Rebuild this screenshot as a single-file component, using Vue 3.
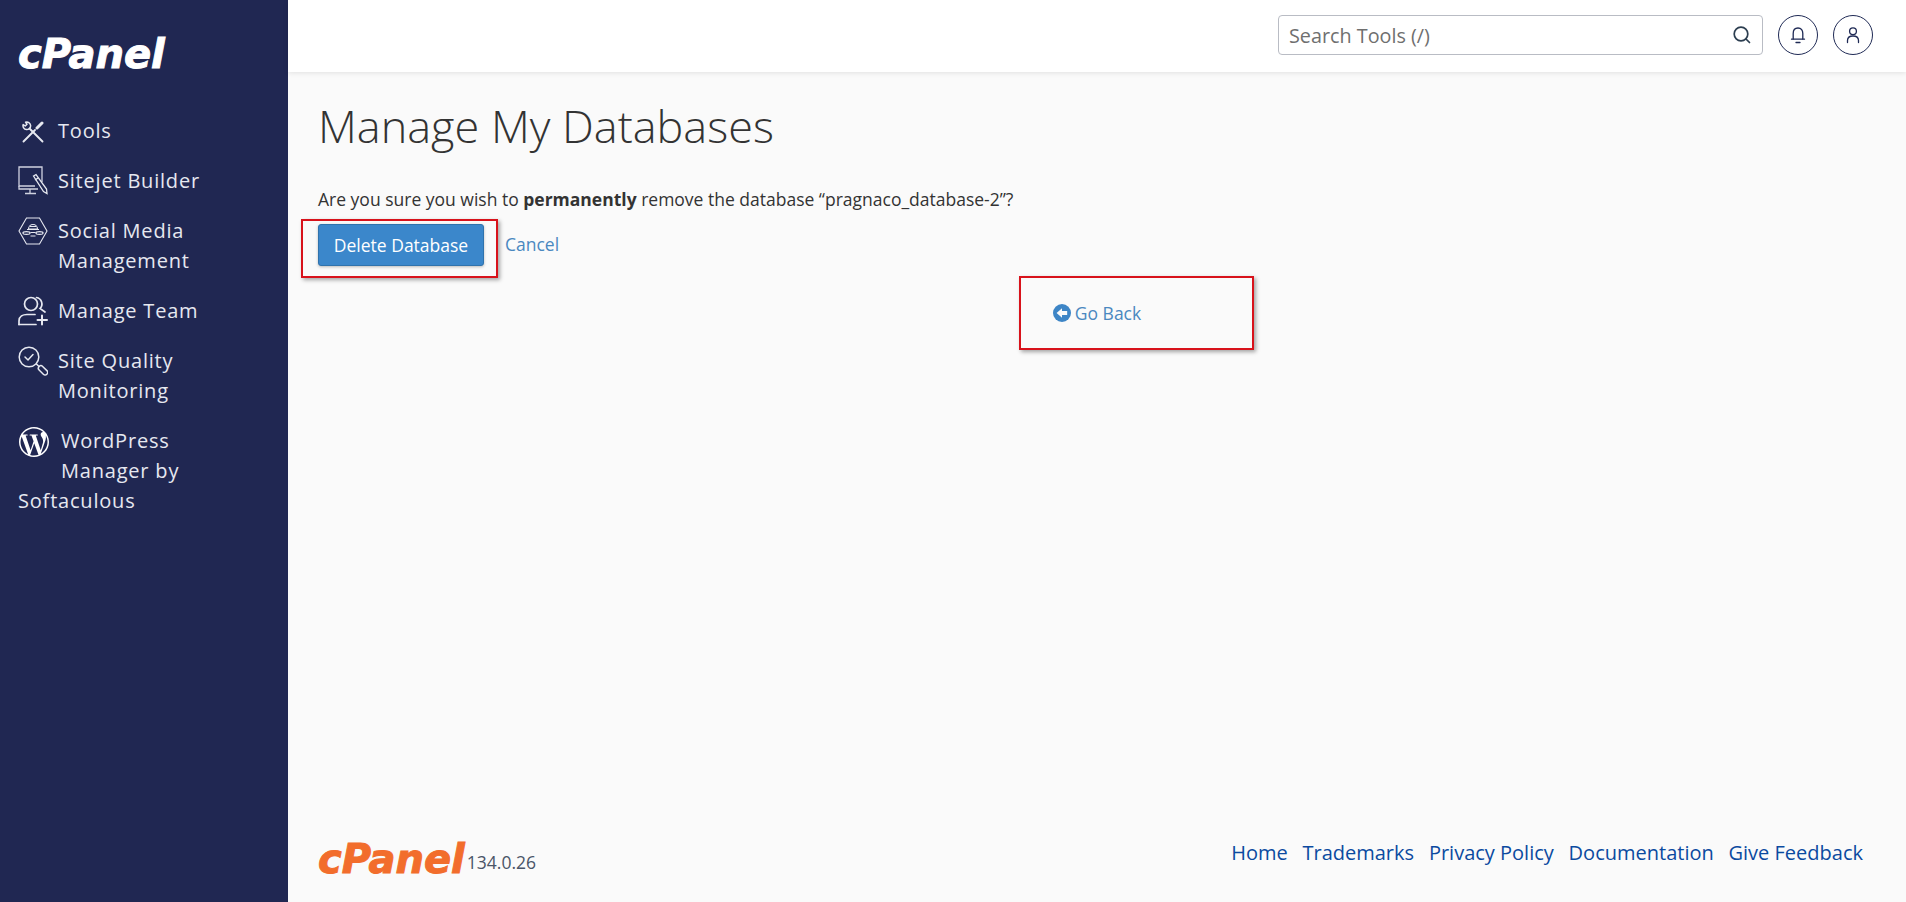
<script setup>
const footerLinks = ['Home', 'Trademarks', 'Privacy Policy', 'Documentation', 'Give Feedback']
</script>

<template>
  <div class="layout">
    <aside class="sidebar">
      <div class="brand">cPanel</div>
      <nav class="nav">
        <a class="item">
          <svg class="ico tools" viewBox="0 0 22 22" fill="none" stroke="#e6e8f0" stroke-width="1.9" stroke-linecap="round" stroke-linejoin="round">
            <path d="M1.5 20.5 L13 9" />
            <path d="M15 7 L20 2" stroke-width="3" />
            <path d="M7.5 7.5 L20.5 20.5" />
            <path d="M3.6 1.2 A3.8 3.8 0 1 1 1.2 3.6 L3.2 5 L5 3.2 Z" stroke-width="1.5" />
          </svg>
          <span>Tools</span>
        </a>
        <a class="item">
          <svg class="ico" viewBox="0 0 30 30" fill="none" stroke="#cfd2e0" stroke-width="1.3">
            <path d="M24 16 V1 H1 V20 H17" />
            <path d="M1 20 V23 H20" />
            <path d="M12 23 V27 M7 27.5 H18" />
            <path d="M15.5 10 L18 8.6 L28.5 23 L29 27.5 L25.5 25.5 Z" fill="#202752" stroke="#e6e8f0" />
            <path d="M17 14 L20 12" stroke="#e6e8f0" />
          </svg>
          <span>Sitejet Builder</span>
        </a>
        <a class="item">
          <svg class="ico" viewBox="0 0 30 28" fill="none" stroke="#e6e8f0" stroke-width="1.1">
            <path d="M8.5 1 H21.5 L29 14 L21.5 27 H8.5 L1 14 Z" />
            <path d="M10.5 12 A4.5 4.5 0 0 1 19.5 12 Z" />
            <path d="M9 12.5 H21 M12 9.5 H18" />
            <ellipse cx="8.5" cy="16" rx="3.6" ry="1.4" />
            <ellipse cx="21.5" cy="16" rx="3.6" ry="1.4" />
            <path d="M12.5 15.5 H17.5 M12.5 19 H17.5" />
          </svg>
          <span>Social Media<br />Management</span>
        </a>
        <a class="item">
          <svg class="ico" viewBox="0 0 30 30" fill="none" stroke="#e6e8f0" stroke-width="1.7" stroke-linecap="round">
            <circle cx="13" cy="8" r="6.5" />
            <path d="M18.5 1.5 A6.5 6.5 0 0 1 22 12.5 L27 16" />
            <path d="M1 28.5 V25 C1 20.5 5 18.5 9 18.5 H17" />
            <path d="M1 28.5 H18" />
            <path d="M24 19.5 V28.5 M19.5 24 H29" stroke-width="2" />
          </svg>
          <span>Manage Team</span>
        </a>
        <a class="item">
          <svg class="ico" viewBox="0 0 30 30" fill="none" stroke="#e6e8f0" stroke-width="1.5" stroke-linecap="round">
            <circle cx="11" cy="11" r="9.8" />
            <path d="M7 11 L10 14 L15 8.5" />
            <path d="M18.5 18 L21 20.5" />
            <rect x="19.5" y="21.8" width="11" height="5" rx="2.5" transform="rotate(45 25 24.3)" />
          </svg>
          <span>Site Quality<br />Monitoring</span>
        </a>
        <a class="item wp">
          <svg class="ico wp-ico" viewBox="0 0 24 24">
            <path fill="#fff" d="M21.469 6.825c.84 1.537 1.318 3.3 1.318 5.175 0 3.979-2.156 7.456-5.363 9.325l3.295-9.527c.615-1.54.82-2.771.82-3.864 0-.405-.026-.78-.07-1.11m-7.981.105c.647-.03 1.232-.105 1.232-.105.582-.075.514-.93-.067-.899 0 0-1.755.135-2.88.135-1.064 0-2.85-.15-2.85-.15-.585-.03-.661.855-.075.885 0 0 .54.061 1.125.09l1.68 4.605-2.37 7.08L5.354 6.9c.649-.03 1.234-.1 1.234-.1.585-.075.516-.93-.065-.896 0 0-1.746.138-2.874.138-.2 0-.438-.008-.69-.015C4.911 3.15 8.235 1.215 12 1.215c2.809 0 5.365 1.072 7.286 2.833-.046-.003-.091-.009-.141-.009-1.06 0-1.812.923-1.812 1.914 0 .89.513 1.643 1.06 2.531.411.72.89 1.643.89 2.977 0 .915-.354 1.994-.821 3.479l-1.075 3.585-3.9-11.61.001.014zM12 22.784c-1.059 0-2.081-.153-3.048-.437l3.237-9.406 3.315 9.087c.024.053.05.101.078.149-1.12.393-2.325.609-3.582.609M1.211 12c0-1.564.336-3.05.935-4.39L7.29 21.709C3.694 19.96 1.212 16.271 1.211 12M12 0C5.385 0 0 5.385 0 12s5.385 12 12 12 12-5.385 12-12S18.615 0 12 0" />
          </svg>
          <span>WordPress<br />Manager by<br />Softaculous</span>
        </a>
      </nav>
    </aside>

    <div class="main">
      <header class="topbar">
        <div class="search">
          <span class="placeholder">Search Tools (/)</span>
          <svg class="search-ico" viewBox="0 0 20 20" fill="none" stroke="#2c3e50" stroke-width="1.7" stroke-linecap="round">
            <circle cx="9" cy="9" r="6.8" />
            <path d="M14 14 L17.5 17.5" />
          </svg>
        </div>
        <button class="round">
          <svg viewBox="0 0 20 20" width="20" height="20" fill="none" stroke="#1f2a55" stroke-width="1.3" stroke-linecap="round">
            <path d="M5.2 14 V8.5 C5.2 5 7 3 10 3 C13 3 14.8 5 14.8 8.5 V14" />
            <path d="M3.5 14.2 H16.5" />
            <path d="M8 17.5 H12" />
          </svg>
        </button>
        <button class="round">
          <svg viewBox="0 0 20 20" width="20" height="20" fill="none" stroke="#1f2a55" stroke-width="1.3" stroke-linecap="round">
            <circle cx="10" cy="6.2" r="3.4" />
            <path d="M4.5 17.5 V15.5 C4.5 12.5 7 11 10 11 C13 11 15.5 12.5 15.5 15.5 V17.5" />
          </svg>
        </button>
      </header>

      <main class="content">
        <h1 class="title">Manage My Databases</h1>
        <p class="question">Are you sure you wish to <strong>permanently</strong> remove the database “pragnaco_database-2”?</p>
        <div class="actions">
          <button class="primary">Delete Database</button>
          <a class="link cancel">Cancel</a>
          <span class="mark mark-delete"></span>
        </div>
        <div class="back">
          <a class="link back-link">
            <svg viewBox="0 0 16 16" width="18" height="18">
              <circle cx="8" cy="8" r="8" fill="#3d85c6" />
              <path d="M3.2 8 L8 3.8 V6.3 H12.6 V9.7 H8 V12.2 Z" fill="#fafafa" />
            </svg>
            <span>Go Back</span>
          </a>
          <span class="mark mark-back"></span>
        </div>
      </main>

      <footer class="footer">
        <div class="foot-left">
          <span class="foot-logo">cPanel</span>
          <span class="version">134.0.26</span>
        </div>
        <div class="foot-links">
          <a v-for="l in footerLinks" :key="l">{{ l }}</a>
        </div>
      </footer>
    </div>
  </div>
</template>

<style>
html, body { margin: 0; padding: 0; }
</style>

<style scoped>
.layout {
  display: flex;
  width: 1906px;
  height: 902px;
  overflow: hidden;
  font-family: "Open Sans", "Liberation Sans", sans-serif;
  background: #fafafa;
  color: #333;
}
.sidebar {
  width: 288px;
  flex: none;
  background: #202752;
  color: #e6e8f0;
  padding: 0 18px;
  box-sizing: border-box;
}
.brand {
  height: 116px;
  padding-top: 31px;
  box-sizing: border-box;
  font-family: "DejaVu Sans", sans-serif;
  font-weight: 700;
  font-style: oblique;
  font-size: 40px;
  line-height: 46px;
  -webkit-text-stroke: 1px #fff;
  color: #fff;
}
.nav {
  display: flex;
  flex-direction: column;
  gap: 20px;
}
.item {
  display: flex;
  align-items: flex-start;
  font-size: 20px;
  line-height: 30px;
  letter-spacing: 0.8px;
}
.item > span { margin-left: 10px; }
.ico {
  width: 30px;
  height: 30px;
  flex: none;
}
.tools {
  width: 22px;
  height: 22px;
  margin: 5px 4px 0 4px;
}
.wp {
  display: block;
}
.wp > span { margin-left: 0; }
.wp-ico {
  float: left;
  margin: 1px 12px 29px 1px;
}
.main {
  flex: 1;
  min-width: 0;
  display: flex;
  flex-direction: column;
}
.topbar {
  height: 72px;
  flex: none;
  background: #fff;
  box-shadow: 0 1px 5px rgba(0, 0, 0, 0.1);
  display: flex;
  align-items: flex-start;
  justify-content: flex-end;
  padding: 15px 33px 0 0;
  box-sizing: border-box;
  gap: 15px;
}
.search {
  width: 485px;
  height: 40px;
  box-sizing: border-box;
  border: 1px solid #b9bcc4;
  border-radius: 4px;
  display: flex;
  align-items: center;
  justify-content: space-between;
  padding: 0 10px;
}
.placeholder {
  font-size: 19.8px;
  color: #6f6f6f;
}
.search-ico { width: 20px; height: 20px; }
.round {
  width: 40px;
  height: 40px;
  padding: 0;
  border: 1.3px solid #1f2a55;
  border-radius: 50%;
  background: #fff;
  display: flex;
  align-items: center;
  justify-content: center;
}
.content {
  flex: 1;
  padding: 0 30px;
}
.title {
  margin: 23px 0 0;
  font-weight: 300;
  font-size: 45px;
  line-height: 62px;
  color: #333;
}
.question {
  margin: 29px 0 0;
  font-size: 17.5px;
  line-height: 26px;
}
.question strong { font-weight: 700; }
.actions {
  position: relative;
  display: flex;
  align-items: center;
  margin-top: 12px;
}
.primary {
  width: 166px;
  height: 42px;
  padding: 0;
  border: 1px solid #2f73ad;
  border-radius: 3px;
  background: #3b87cb;
  color: #fff;
  font-family: inherit;
  font-size: 17.5px;
  box-shadow: 0 1px 3px rgba(0, 0, 0, 0.25);
}
.link { color: #4a88c0; font-size: 17.5px; }
.cancel { margin-left: 21px; padding-bottom: 2px; }
.mark {
  position: absolute;
  box-sizing: border-box;
  border: 2px solid #d8121b;
  box-shadow: 2px 2px 4px rgba(0, 0, 0, 0.35);
}
.mark-delete {
  left: -17px;
  top: -5px;
  width: 197px;
  height: 59px;
}
.back {
  position: relative;
  text-align: center;
  margin-top: 34px;
  line-height: 26px;
}
.back-link {
  display: inline-flex;
  align-items: center;
  gap: 4px;
}
.mark-back {
  left: 701px;
  top: -24px;
  width: 235px;
  height: 74px;
}
.footer {
  flex: none;
  height: 70px;
  display: flex;
  justify-content: space-between;
  padding: 0 43px 0 30px;
  box-sizing: border-box;
}
.foot-left {
  display: flex;
  align-items: flex-end;
  height: 46px;
}
.foot-logo {
  font-family: "DejaVu Sans", sans-serif;
  font-weight: 700;
  font-style: oblique;
  font-size: 40px;
  line-height: 46px;
  margin-bottom: -4px;
  -webkit-text-stroke: 1px #f26d2c;
  color: #f26d2c;
}
.version {
  font-size: 17.5px;
  line-height: 32px;
  color: #4a5568;
  margin-left: 2px;
}
.foot-links {
  display: flex;
  gap: 14.8px;
  padding-top: 6px;
  font-size: 20px;
  line-height: 30px;
  color: #0b4aa0;
}
</style>
